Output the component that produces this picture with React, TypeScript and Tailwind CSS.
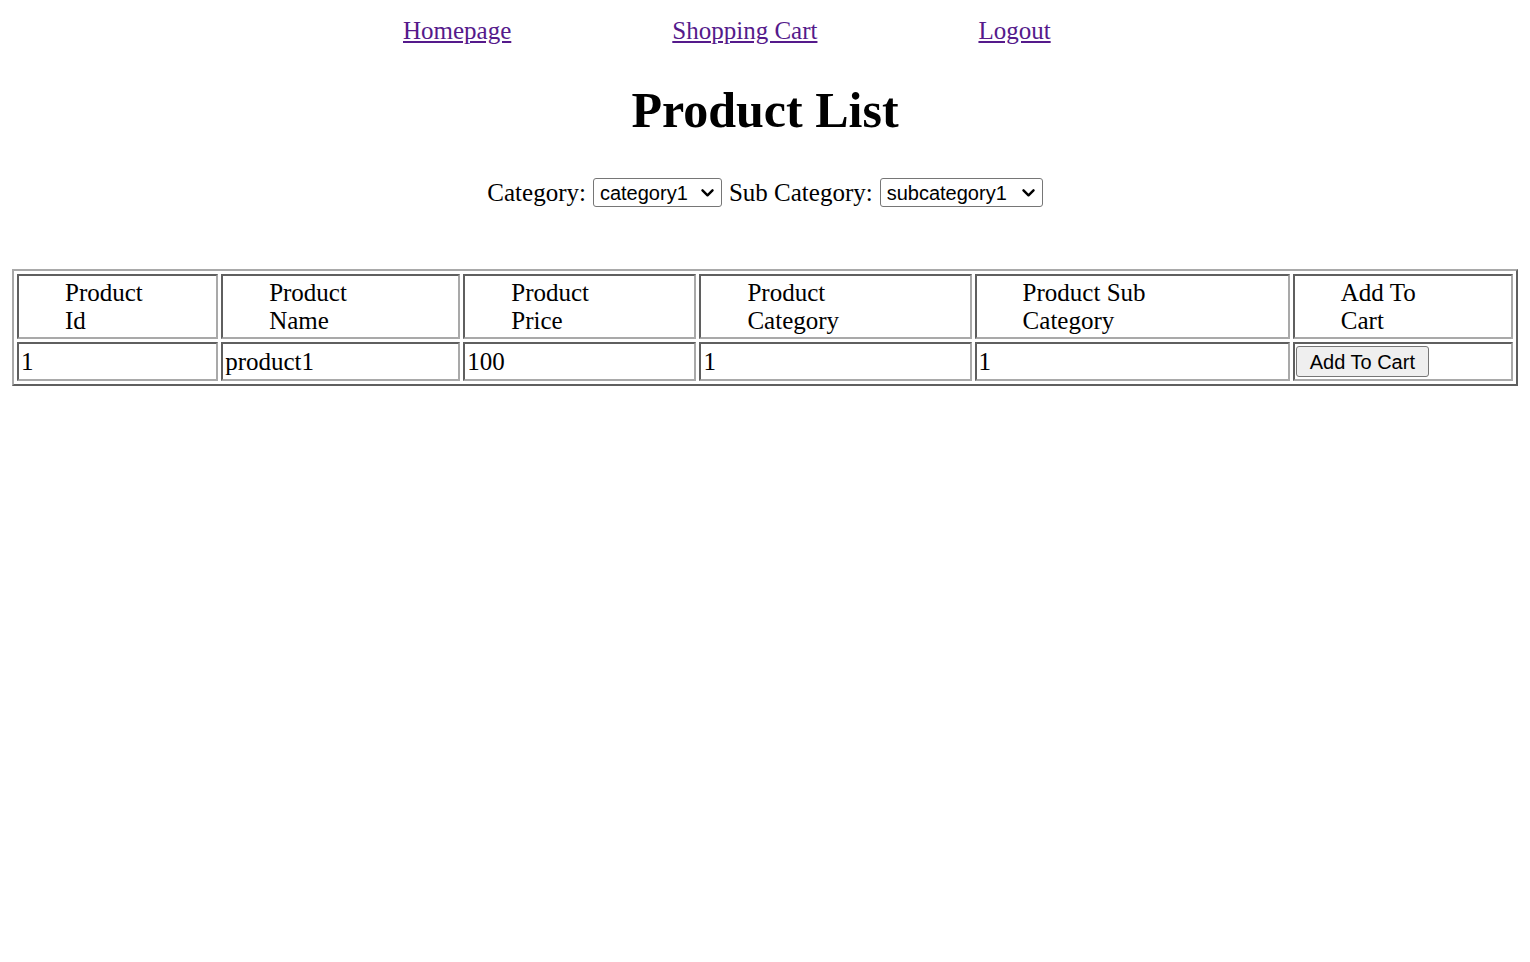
import React from 'react';

const serif = "font-['Liberation_Serif','Times_New_Roman',serif]";
const sans = "font-['Liberation_Sans',Arial,sans-serif]";

const headers = [
  { label: ['Product', 'Id'], w: 'w-[201px]' },
  { label: ['Product', 'Name'], w: 'w-[239px]' },
  { label: ['Product', 'Price'], w: 'w-[233px]' },
  { label: ['Product', 'Category'], w: 'w-[272px]' },
  { label: ['Product Sub', 'Category'], w: 'w-[315px]' },
  { label: ['Add To', 'Cart'], w: 'w-[220px]' },
];

const products = [
  { id: '1', name: 'product1', price: '100', category: '1', subCategory: '1' },
];

const cellBorder =
  'border-2 border-t-[#5f5f5f] border-l-[#5f5f5f] border-r-[#a9a9a9] border-b-[#a9a9a9]';

function Chevron() {
  return (
    <svg
      className="pointer-events-none absolute right-[8px] top-1/2 -translate-y-1/2"
      width="13"
      height="9"
      viewBox="0 0 13 9"
      fill="none"
    >
      <path d="M1.5 1.8l5 5 5-5" stroke="#000" strokeWidth="2.4" strokeLinecap="round" strokeLinejoin="round" />
    </svg>
  );
}

function Select({ value, width }: { value: string; width: string }) {
  return (
    <span className={`relative inline-block ${width}`}>
      <select
        defaultValue={value}
        className={`${sans} block h-[29px] w-full appearance-none rounded-[3px] border border-[#767676] bg-white pl-[6px] pr-[26px] text-[20px] leading-[24px] text-black`}
      >
        <option value={value}>{value}</option>
      </select>
      <Chevron />
    </span>
  );
}

export default function App() {
  return (
    <div className={`${serif} m-[12px] text-[25px] text-black`}>
      {/* Nav links */}
      <nav className="flex gap-[161px] pl-[391px] pt-[5px] leading-[28px]">
        <a href="#" className="text-[#551a8b] underline">Homepage</a>
        <a href="#" className="text-[#551a8b] underline">Shopping Cart</a>
        <a href="#" className="text-[#551a8b] underline">Logout</a>
      </nav>

      <h1 className="mt-[38px] text-center text-[50px] font-bold leading-[55px]">Product List</h1>

      {/* Filters */}
      <div className="mt-[40px] flex items-center justify-center gap-[7px] leading-[28px]">
        <span>Category:</span>
        <Select value="category1" width="w-[129px]" />
        <span>Sub Category:</span>
        <Select value="subcategory1" width="w-[163px]" />
      </div>

      {/* Product table */}
      <table className="mt-[62px] w-full table-fixed border-separate border-spacing-[3px] border-2 border-t-[#a9a9a9] border-l-[#a9a9a9] border-r-[#5f5f5f] border-b-[#5f5f5f]">
        <thead>
          <tr>
            {headers.map((h) => (
              <th
                key={h.label.join(' ')}
                className={`${h.w} ${cellBorder} pt-[3px] pb-[2px] pl-[46px] text-left font-normal leading-[28px]`}
              >
                {h.label[0]}
                <br />
                {h.label[1]}
              </th>
            ))}
          </tr>
        </thead>
        <tbody>
          {products.map((p) => (
            <tr key={p.id}>
              {[p.id, p.name, p.price, p.category, p.subCategory].map((v, i) => (
                <td key={i} className={`${cellBorder} px-[2px] py-0 align-middle leading-[28px]`}>
                  {v}
                </td>
              ))}
              <td className={`${cellBorder} px-[1px] py-[2px] align-middle`}>
                <button
                  className={`${sans} block h-[31px] w-[133px] rounded-[3px] border border-[#767676] bg-[#efefef] text-[20px] leading-[24px] text-black`}
                >
                  Add To Cart
                </button>
              </td>
            </tr>
          ))}
        </tbody>
      </table>
    </div>
  );
}
